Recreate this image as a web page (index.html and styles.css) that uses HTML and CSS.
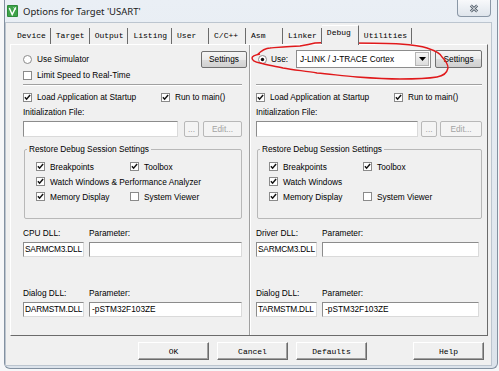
FILE: index.html
```html
<!DOCTYPE html>
<html lang="en">

<head>
  <meta charset="UTF-8">
  <title>Options for Target 'USART'</title>
  <link rel="stylesheet" href="styles.css">
</head>

<body>
  <div class="window">
    <div class="titlebar">
      <svg class="app-icon" viewBox="0 0 11 12">
        <rect x="0" y="0" width="11" height="12" rx="1" fill="#2e8b3a" />
        <rect x="1" y="1" width="9" height="10" fill="#3fa34a" />
        <path d="M2.3 3 L5.2 9.5 L8.7 2.4" fill="none" stroke="#fff" stroke-width="1.4" />
        <path d="M6.5 2.5 L8.8 5" fill="none" stroke="#d8f0d8" stroke-width="1" />
      </svg>
      <span class="title">Options for Target 'USART'</span>
      <div class="close-btn">
        <svg viewBox="0 0 10 9" width="10" height="9">
          <path d="M1.8 1.5 L8.2 7.5 M8.2 1.5 L1.8 7.5" stroke="#56616e" stroke-width="2.8" />
          <path d="M1.8 1.5 L8.2 7.5 M8.2 1.5 L1.8 7.5" stroke="#f4f6f8" stroke-width="1" />
        </svg>
      </div>
    </div>

    <div class="client">
      <div class="tabs">
        <div class="tab">Device</div>
        <div class="tab">Target</div>
        <div class="tab">Output</div>
        <div class="tab">Listing</div>
        <div class="tab">User</div>
        <div class="tab">C/C++</div>
        <div class="tab">Asm</div>
        <div class="tab">Linker</div>
        <div class="tab active">Debug</div>
        <div class="tab">Utilities</div>
      </div>

      <div class="sheet">
        <!-- simulator side -->
        <div class="col col-left">
          <div class="row-top">
            <label class="opt">
              <svg class="rb" viewBox="0 0 9 9"><circle cx="4.5" cy="4.5" r="4" /></svg>
              Use Simulator
            </label>
            <button class="btn-w settings">Settings</button>
          </div>
          <label class="opt row-line">
            <svg class="cb" viewBox="0 0 9 9"><rect x=".5" y=".5" width="8" height="8" /></svg>
            Limit Speed to Real-Time
          </label>
          <div class="sep"></div>
          <div class="pair">
            <label class="opt">
              <svg class="cb" viewBox="0 0 9 9"><rect x=".5" y=".5" width="8" height="8" /><path d="M1.9 4.2l1.7 2L7.1 2.1" /></svg>
              Load Application at Startup
            </label>
            <label class="opt">
              <svg class="cb" viewBox="0 0 9 9"><rect x=".5" y=".5" width="8" height="8" /><path d="M1.9 4.2l1.7 2L7.1 2.1" /></svg>
              Run to main()
            </label>
          </div>
          <div class="lbl">Initialization File:</div>
          <div class="file-row">
            <div class="edit"></div>
            <button class="btn-w dots" disabled>...</button>
            <button class="btn-w edit-btn" disabled>Edit...</button>
          </div>
          <fieldset class="group">
            <legend>Restore Debug Session Settings</legend>
            <div class="group-grid">
              <label class="opt">
                <svg class="cb" viewBox="0 0 9 9"><rect x=".5" y=".5" width="8" height="8" /><path d="M1.9 4.2l1.7 2L7.1 2.1" /></svg>
                Breakpoints
              </label>
              <label class="opt">
                <svg class="cb" viewBox="0 0 9 9"><rect x=".5" y=".5" width="8" height="8" /><path d="M1.9 4.2l1.7 2L7.1 2.1" /></svg>
                Toolbox
              </label>
              <label class="opt wide">
                <svg class="cb" viewBox="0 0 9 9"><rect x=".5" y=".5" width="8" height="8" /><path d="M1.9 4.2l1.7 2L7.1 2.1" /></svg>
                Watch Windows &amp; Performance Analyzer
              </label>
              <label class="opt">
                <svg class="cb" viewBox="0 0 9 9"><rect x=".5" y=".5" width="8" height="8" /><path d="M1.9 4.2l1.7 2L7.1 2.1" /></svg>
                Memory Display
              </label>
              <label class="opt">
                <svg class="cb" viewBox="0 0 9 9"><rect x=".5" y=".5" width="8" height="8" /></svg>
                System Viewer
              </label>
            </div>
          </fieldset>
          <div class="dll-lbl first"><span>CPU DLL:</span><span>Parameter:</span></div>
          <div class="dll-row">
            <div class="edit dll-name">SARMCM3.DLL</div>
            <div class="edit"></div>
          </div>
          <div class="dll-lbl second"><span>Dialog DLL:</span><span>Parameter:</span></div>
          <div class="dll-row">
            <div class="edit dll-name">DARMSTM.DLL</div>
            <div class="edit">-pSTM32F103ZE</div>
          </div>
        </div>

        <div class="divider"></div>

        <!-- target side -->
        <div class="col col-right">
          <div class="row-top">
            <label class="opt use">
              <svg class="rb" viewBox="0 0 9 9"><circle cx="4.5" cy="4.5" r="4" /><circle class="dot" cx="4.5" cy="4.5" r="1.7" /></svg>
              Use:
            </label>
            <div class="combo">
              <span class="combo-text">J-LINK / J-TRACE Cortex</span>
              <span class="drop"><svg viewBox="0 0 7 4" width="7" height="4"><path d="M0 0h7L3.5 4z" /></svg></span>
            </div>
            <button class="btn-w settings-r">Settings</button>
          </div>
          <div class="row-line"></div>
          <div class="sep"></div>
          <div class="pair">
            <label class="opt">
              <svg class="cb" viewBox="0 0 9 9"><rect x=".5" y=".5" width="8" height="8" /><path d="M1.9 4.2l1.7 2L7.1 2.1" /></svg>
              Load Application at Startup
            </label>
            <label class="opt">
              <svg class="cb" viewBox="0 0 9 9"><rect x=".5" y=".5" width="8" height="8" /><path d="M1.9 4.2l1.7 2L7.1 2.1" /></svg>
              Run to main()
            </label>
          </div>
          <div class="lbl">Initialization File:</div>
          <div class="file-row">
            <div class="edit"></div>
            <button class="btn-w dots" disabled>...</button>
            <button class="btn-w edit-btn" disabled>Edit...</button>
          </div>
          <fieldset class="group">
            <legend>Restore Debug Session Settings</legend>
            <div class="group-grid">
              <label class="opt">
                <svg class="cb" viewBox="0 0 9 9"><rect x=".5" y=".5" width="8" height="8" /><path d="M1.9 4.2l1.7 2L7.1 2.1" /></svg>
                Breakpoints
              </label>
              <label class="opt">
                <svg class="cb" viewBox="0 0 9 9"><rect x=".5" y=".5" width="8" height="8" /><path d="M1.9 4.2l1.7 2L7.1 2.1" /></svg>
                Toolbox
              </label>
              <label class="opt wide">
                <svg class="cb" viewBox="0 0 9 9"><rect x=".5" y=".5" width="8" height="8" /><path d="M1.9 4.2l1.7 2L7.1 2.1" /></svg>
                Watch Windows
              </label>
              <label class="opt">
                <svg class="cb" viewBox="0 0 9 9"><rect x=".5" y=".5" width="8" height="8" /><path d="M1.9 4.2l1.7 2L7.1 2.1" /></svg>
                Memory Display
              </label>
              <label class="opt">
                <svg class="cb" viewBox="0 0 9 9"><rect x=".5" y=".5" width="8" height="8" /></svg>
                System Viewer
              </label>
            </div>
          </fieldset>
          <div class="dll-lbl first"><span>Driver DLL:</span><span>Parameter:</span></div>
          <div class="dll-row">
            <div class="edit dll-name">SARMCM3.DLL</div>
            <div class="edit"></div>
          </div>
          <div class="dll-lbl second"><span>Dialog DLL:</span><span>Parameter:</span></div>
          <div class="dll-row">
            <div class="edit dll-name">TARMSTM.DLL</div>
            <div class="edit">-pSTM32F103ZE</div>
          </div>
        </div>
      </div>

      <div class="buttons">
        <button class="btn">OK</button>
        <button class="btn">Cancel</button>
        <button class="btn">Defaults</button>
        <button class="btn help">Help</button>
      </div>
    </div>

    <!-- hand drawn marker round the debugger choice -->
    <svg class="marker" viewBox="0 0 204 42" width="204" height="42">
      <path d="M9 13 C14 8 18 6 22 6 C34 5 45 4 52 4 C58 3 63 2 67 1 C80 0 92 1 102 1 C120 1 138 1 152 2 C165 3 173 4 179 6 C188 9 193 12 194 15 C198 19 200 23 200 26 C199 31 195 34 189 35 C177 37 165 37 152 37 C137 37 123 36 109 35 C95 34 82 32 69 31 C57 29 46 28 35 26 C27 24 19 23 12 21 C7 20 4 18 4 16 C4 14 7 13 12 12" fill="none" stroke="#e0191b" stroke-width="1.4" />
    </svg>
  </div>
</body>

</html>
```

FILE: styles.css
```css
body {
  margin: 0;
  background: #f6f7f9;
  font-family: 'Liberation Sans', Arial, sans-serif;
  font-size: 8.3px;
  color: #000;
}

.window {
  position: relative;
  margin-left: 4px;
  width: 494px;
  height: 369px;
  box-sizing: border-box;
  border: 1px solid #8391a1;
  border-top: none;
  border-radius: 0 0 6px 6px;
  background: linear-gradient(#eaeff5, #dce3eb);
  padding: 0 5px 2px 0;
  display: flex;
  flex-direction: column;
}

.titlebar {
  height: 22px;
  flex: none;
  display: flex;
  align-items: flex-start;
  padding-left: 2px;
}

.app-icon {
  width: 11px;
  height: 12px;
  margin-top: 5px;
  margin-right: 5px;
}

.title {
  font-family: 'Noto Sans', 'Liberation Sans', sans-serif;
  font-size: 9.5px;
  line-height: 12px;
  margin-top: 6px;
  color: #1b1b1b;
}

.close-btn {
  margin-left: auto;
  margin-right: 1px;
  width: 34px;
  height: 17px;
  box-sizing: border-box;
  border: 1px solid #8a97a6;
  border-top: none;
  border-radius: 0 0 4px 4px;
  background: linear-gradient(#f8f9fb, #dfe5ec);
  display: flex;
  align-items: center;
  justify-content: center;
}

.client {
  flex: 1;
  background: #f0f0f0;
  border: 1px solid #bcc5cf;
  padding: 2px 3px 5px 4px;
  display: flex;
  flex-direction: column;
}

/* tab strip */
.tabs {
  display: flex;
  align-items: flex-end;
  height: 19px;
  padding-left: 2px;
  position: relative;
  z-index: 1;
}

.tab {
  height: 16px;
  min-width: 37px;
  box-sizing: border-box;
  padding: 0 4px 0 5px;
  border-right: 1px solid #6b6b6b;
  font-family: 'Liberation Mono', monospace;
  font-size: 8px;
  line-height: 16px;
}

.tab.active {
  height: 20px;
  margin-bottom: -1px;
  background: #f0f0f0;
  border-top: 1px solid #fff;
  line-height: 14px;
}

/* tab page */
.sheet {
  height: 292px;
  flex: none;
  box-sizing: border-box;
  border: 1px solid;
  border-color: #fff #6b6b6b #6b6b6b #fff;
  display: grid;
  grid-template-columns: 238px 2px 1fr;
}

.divider {
  border-left: 1px solid #a0a0a0;
  border-right: 1px solid #fff;
}

.col {
  display: flex;
  flex-direction: column;
  padding-top: 5px;
}

.col-left {
  padding-left: 12px;
  padding-right: 7px;
}

.col-right {
  padding-left: 5px;
  padding-right: 10px;
}

.row-top {
  display: flex;
  align-items: center;
  height: 18px;
}

.row-line {
  height: 14px;
}

.opt {
  display: flex;
  align-items: center;
  gap: 5px;
  height: 14px;
  white-space: nowrap;
}

.cb,
.rb {
  width: 9px;
  height: 9px;
  flex: none;
}

.cb rect {
  fill: #fff;
  stroke: #8a8a8a;
}

.cb path {
  fill: none;
  stroke: #141414;
  stroke-width: 1.5;
}

.rb circle {
  fill: #fff;
  stroke: #8a8a8a;
}

.rb .dot {
  fill: #111;
  stroke: none;
}

.sep {
  margin-top: 2px;
  border-top: 1px solid #a0a0a0;
  border-bottom: 1px solid #fff;
}

.pair {
  display: grid;
  grid-template-columns: 138px auto;
  margin-top: 4px;
}

.lbl {
  height: 14px;
  line-height: 14px;
  margin-top: 1px;
}

.file-row {
  display: flex;
  height: 16px;
  margin-top: 2px;
}

.edit {
  background: #fff;
  border: 1px solid;
  border-color: #8c8c8c #dadada #dadada #8c8c8c;
  box-sizing: border-box;
  padding-left: 2px;
  white-space: nowrap;
  overflow: hidden;
}

.edit.dll-name {
  padding-left: 1px;
  letter-spacing: -0.2px;
}

.file-row .edit {
  flex: 1;
}

/* win7 push buttons */
.btn-w {
  font-family: inherit;
  font-size: 8.3px;
  color: #000;
  padding: 0;
  height: 17px;
  border: 1px solid #707070;
  border-radius: 2px;
  background: linear-gradient(#f5f5f5, #ebebeb 50%, #dddddd 51%, #d0d0d0);
}

.btn-w:disabled {
  color: #a3a3a3;
  border-color: #b8b8b8;
  background: #f4f4f4;
}

.settings {
  width: 46px;
  margin-left: auto;
  margin-right: -5px;
}

.dots {
  width: 15px;
  height: 16px;
  margin-left: 6px;
}

.edit-btn {
  width: 39px;
  height: 16px;
  margin-left: 4px;
}

.col-right .dots {
  width: 16px;
  margin-left: 3px;
}

.col-right .edit-btn {
  width: 42px;
  margin-left: 3px;
}

.use {
  margin-left: 2px;
  gap: 4px;
}

.combo {
  width: 135px;
  height: 18px;
  margin-left: 8px;
  box-sizing: border-box;
  border: 1px solid #8c8c8c;
  background: #fff;
  display: flex;
  align-items: center;
}

.combo-text {
  flex: 1;
  padding-left: 3px;
  white-space: nowrap;
}

.drop {
  width: 14px;
  height: 14px;
  margin-right: 1px;
  box-sizing: border-box;
  border: 1px solid #b5b5b5;
  background: linear-gradient(#f6f6f6, #dcdcdc);
  display: flex;
  align-items: center;
  justify-content: center;
}

.settings-r {
  width: 47px;
  height: 18px;
  margin-left: 4px;
}

/* group box */
.group {
  margin: 6px 0 0 1px;
  padding: 4px 0 0 11px;
  height: 76px;
  box-sizing: border-box;
  border: 1px solid #b8b8b8;
  border-radius: 2px;
  min-width: 0;
}

.group legend {
  font-size: 8.3px;
  line-height: 12px;
  padding: 0 2px;
  margin-left: -9px;
}

.group-grid {
  display: grid;
  grid-template-columns: 94px auto;
  grid-auto-rows: 15px;
}

.group-grid .opt {
  height: 15px;
}

.group-grid .wide {
  grid-column: 1 / -1;
}

.dll-lbl,
.dll-row {
  display: grid;
  grid-template-columns: 61px 1fr;
  column-gap: 5px;
}

.dll-lbl {
  height: 14px;
  line-height: 14px;
}

.dll-lbl.first {
  margin-top: 7px;
}

.dll-lbl.second {
  margin-top: 29px;
}

.dll-row {
  height: 15px;
  margin-top: 2px;
  line-height: 13px;
}

.col-right .dll-row {
  margin-right: 3px;
}

/* bottom buttons */
.buttons {
  display: flex;
  gap: 8px;
  margin-top: 6px;
  padding-left: 128px;
  padding-right: 4px;
}

.btn {
  width: 71px;
  height: 18px;
  padding: 0;
  font-family: 'Liberation Mono', monospace;
  font-size: 8px;
  color: #000;
  background: #f0f0f0;
  border: 1px solid;
  border-color: #fff #6b6b6b #6b6b6b #fff;
  box-shadow: inset -1px -1px #a0a0a0;
}

.btn.help {
  margin-left: auto;
}

.marker {
  position: absolute;
  left: 243px;
  top: 42px;
  pointer-events: none;
}
```
